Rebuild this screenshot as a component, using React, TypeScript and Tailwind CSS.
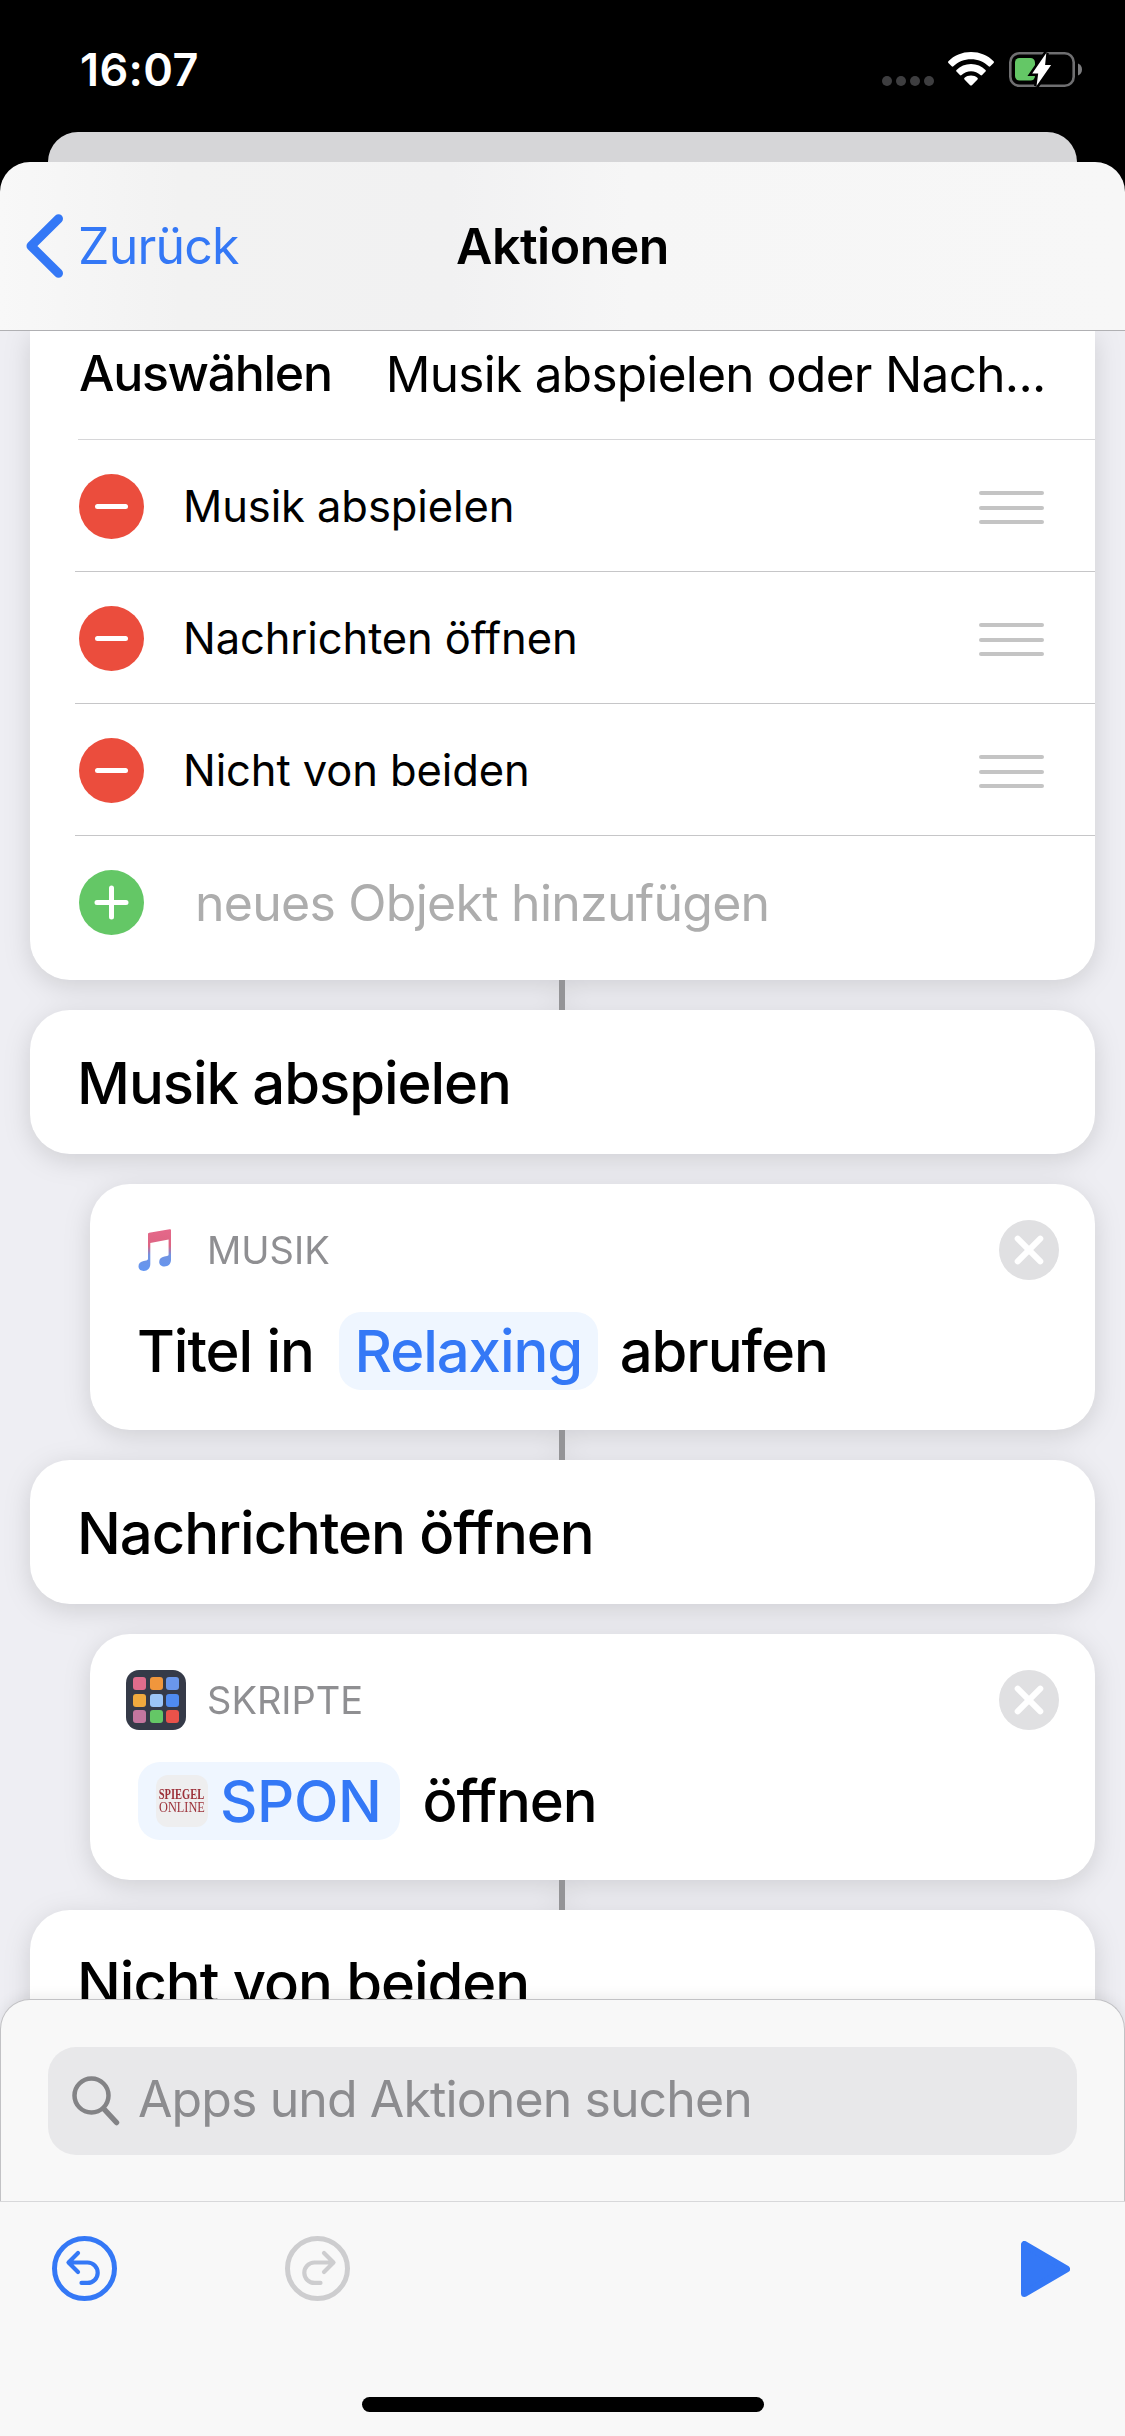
import { ReactNode } from 'react';

const CHOICES = ['Musik abspielen', 'Nachrichten öffnen', 'Nicht von beiden'];

const APP_COLORS = [
  'bg-[#e06c8c]',
  'bg-[#f0963c]',
  'bg-[#6a97ec]',
  'bg-[#f0aa3e]',
  'bg-[#9cc5f6]',
  'bg-[#4f8bf0]',
  'bg-[#c4769f]',
  'bg-[#64c766]',
  'bg-[#e9524a]',
];

function StatusBar() {
  return (
    <div className="flex h-[132px] shrink-0 items-start justify-between pl-[80px] pr-[43px] pt-[52px] text-white">
      <span className="text-[45px] font-semibold leading-[35px] tracking-[0.4px]">16:07</span>
      <div className="flex h-[34px] items-start">
        <div className="mt-[24px] flex gap-[4px]">
          {[0, 1, 2, 3].map((dot) => (
            <span key={dot} className="size-[10px] rounded-full bg-[#3e3e40]" />
          ))}
        </div>
        <svg className="ml-[14px]" width="46" height="34" viewBox="0 0 46 34" fill="#fff">
          <path d="M23 0C32 0 40 3.4 45.6 9.2c.5.5.5 1.2 0 1.7l-3.3 3.4c-.5.5-1.2.5-1.7 0C36 9.8 29.8 7.3 23 7.3S10 9.8 5.4 14.3c-.5.5-1.2.5-1.7 0L.4 10.9c-.5-.5-.5-1.2 0-1.7C6 3.4 14 0 23 0z" />
          <path d="M23 12c5.7 0 10.8 2.2 14.5 5.9.5.5.5 1.2 0 1.7l-3.4 3.4c-.5.5-1.2.5-1.7 0-2.5-2.3-5.8-3.7-9.400-3.700s-6.900 1.400-9.400 3.700c-.5.5-1.200.5-1.700 0l-3.400-3.400c-.5-.5-.5-1.200 0-1.700C12.200 14.200 17.300 12 23 12z" />
          <path d="M23 23.500c2.500 0 4.700.9 6.400 2.300.6.5.6 1.200.1 1.700l-5.600 5.700c-.5.500-1.300.500-1.800 0l-5.600-5.700c-.5-.5-.5-1.200.1-1.700 1.700-1.400 3.900-2.300 6.400-2.300z" />
        </svg>
        <svg className="ml-[15px]" width="73" height="35" viewBox="0 0 73 35" fill="none">
          <rect x="1.300" y="1.300" width="63.400" height="32.400" rx="9" stroke="#6f6f71" strokeWidth="2.600" />
          <path d="M69 11.500c2.600 1 4 3.300 4 6s-1.400 5-4 6z" fill="#7c7c7e" />
          <rect x="6" y="6" width="20" height="22.500" rx="4.500" fill="#64c766" />
          <path
            d="M37.300 1 23.200 21.500h6L27.500 34l14.600-21h-6z"
            fill="#fff"
            stroke="#000"
            strokeWidth="5"
            paintOrder="stroke"
          />
        </svg>
      </div>
    </div>
  );
}

function NavBar() {
  return (
    <div className="relative flex h-[169px] shrink-0 items-center justify-center rounded-t-[30px] border-b border-[#b0b0b3] bg-[linear-gradient(90deg,#f8f8f8_0%,#f2f2f2_16%,#f1f1f2_40%,#f6f6f6_56%,#f7f7f7_100%)]">
      <button className="absolute left-[26px] flex items-center text-[#3478f6]">
        <svg width="37" height="64" viewBox="0 0 37 64" fill="none">
          <path d="M32.500 4.700 5 32l27.500 27.300" stroke="#3478f6" strokeWidth="9" strokeLinecap="round" strokeLinejoin="round" />
        </svg>
        <span className="ml-[15px] text-[50px] leading-[64px] tracking-[-0.8px]">Zurück</span>
      </button>
      <h1 className="text-[50px] font-semibold leading-[64px] tracking-[-0.5px]">Aktionen</h1>
    </div>
  );
}

function DragHandle() {
  return (
    <span className="mt-[2px] flex w-[65px] flex-col gap-[10.5px]">
      <span className="h-[4px] rounded-full bg-[#c4c4c4]" />
      <span className="h-[4px] rounded-full bg-[#c4c4c4]" />
      <span className="h-[4px] rounded-full bg-[#c4c4c4]" />
    </span>
  );
}

function RoundIcon({ plus }: { plus?: boolean }) {
  return (
    <svg width="65" height="65" viewBox="0 0 65 65" className="shrink-0">
      <circle cx="32.500" cy="32.500" r="32.500" fill={plus ? '#64c766' : '#eb4d3d'} />
      <path
        d={plus ? 'M18 32.500h29M32.500 18v29' : 'M18.500 32.500h28'}
        stroke="#fff"
        strokeWidth="5"
        strokeLinecap="round"
      />
    </svg>
  );
}

function ChoiceCard() {
  return (
    <div className="rounded-b-[40px] bg-white">
      <div className="flex h-[108px] items-center pb-6 pl-[49px]">
        <span className="text-[50px] font-medium leading-[60px] tracking-[-1.3px]">Auswählen</span>
        <span className="ml-[54px] mt-[2px] whitespace-nowrap text-[49.5px] leading-[60px] tracking-[-0.7px]">
          Musik abspielen oder Nach...
        </span>
      </div>
      {CHOICES.map((choice, i) => (
        <div key={choice} className={i === 0 ? 'pl-[48px]' : 'pl-[45px]'}>
          <div
            className={`flex h-[132px] items-center border-t pr-[51px] pt-[2px] ${
              i === 0 ? 'border-[#d6d6d8] pl-[1px]' : 'border-[#c6c6c8] pl-[4px]'
            }`}
          >
            <RoundIcon />
            <span className="-mt-[2px] ml-[39px] flex-1 text-[43.5px] leading-[60px] tracking-[-0.1px]">{choice}</span>
            <DragHandle />
          </div>
        </div>
      ))}
      <div className="pl-[45px]">
        <div className="flex h-[145px] items-center border-t border-[#c6c6c8] pb-[11px] pl-[4px]">
          <RoundIcon plus />
          <span className="ml-[51px] text-[50px] leading-[60px] tracking-[-0.75px] text-[#adadad]">
            neues Objekt hinzufügen
          </span>
        </div>
      </div>
    </div>
  );
}

function CaseCard({ title }: { title: string }) {
  return (
    <div className="flex h-[144px] items-center rounded-[40px] bg-white pl-[47px] pt-[2px] text-[58px] font-medium leading-[80px] tracking-[-1.05px]">
      {title}
    </div>
  );
}

function ActionCard({ icon, label, children }: { icon: ReactNode; label: string; children: ReactNode }) {
  return (
    <div className="ml-[60px] h-[246px] rounded-[40px] bg-white pl-[36px] pr-[36px] pt-[36px]">
      <div className="flex h-[60px] items-center">
        <span className="flex size-[60px] items-center justify-center">{icon}</span>
        <span className="ml-[21px] flex-1 text-[38px] leading-[50px] text-[#8f8f92]">{label}</span>
        <svg width="60" height="60" viewBox="0 0 60 60">
          <circle cx="30" cy="30" r="30" fill="#e0e0e2" />
          <path d="m18.700 18.700 22.600 22.600m0-22.600L18.700 41.300" stroke="#fff" strokeWidth="6" strokeLinecap="round" />
        </svg>
      </div>
      <div className="mt-[32px] flex h-[78px] items-center pl-[12px] text-[58px] font-medium leading-[78px] tracking-[-1.05px]">
        {children}
      </div>
    </div>
  );
}

function MusicIcon() {
  return (
    <svg width="34" height="42" viewBox="0 0 34 42" className="-ml-[3px]">
      <defs>
        <linearGradient id="note" x1="0" y1="0" x2="0" y2="1">
          <stop offset="0" stopColor="#e5688a" />
          <stop offset="0.400" stopColor="#dd6482" />
          <stop offset="0.620" stopColor="#7193e2" />
          <stop offset="1" stopColor="#6396f2" />
        </linearGradient>
      </defs>
      <path
        d="M10 5.200c0-.8.400-1.200 1.200-1.400L31.600.200c.8-.1 1.400.200 1.400 1.100v29.500c0 4.200-2.800 6.700-6.500 6.700-3.200 0-5.300-1.900-5.300-4.600 0-2.900 2-4.600 5.200-5.300l2.600-.5c1.200-.3 1.600-.7 1.600-1.800V10.500L12.300 14v21c0 4.200-2.700 6.900-6.500 6.900-3.100 0-5.300-1.900-5.300-4.700 0-2.900 2-4.600 5.200-5.200l2.500-.6c1.300-.3 1.800-.8 1.800-2z"
        fill="url(#note)"
      />
    </svg>
  );
}

function ScriptIcon() {
  return (
    <div className="grid size-[60px] grid-cols-3 content-center justify-center gap-[3.5px] rounded-[13px] bg-[#353a48] px-[7px]">
      {APP_COLORS.map((color) => (
        <span key={color} className={`h-[13px] rounded-[3px] ${color}`} />
      ))}
    </div>
  );
}

function SpiegelIcon() {
  return (
    <span className="flex size-[52px] flex-col items-center justify-center rounded-[12px] bg-[#eeeeef] font-['Liberation_Serif',serif] text-[15px] leading-[13px] tracking-normal text-[#9c3039]">
      <span className="scale-x-[0.7] font-bold">SPIEGEL</span>
      <span className="scale-x-[0.82] font-normal">ONLINE</span>
    </span>
  );
}

function Connector() {
  return <div className="ml-[529px] h-[30px] w-[6px] bg-[#949497]" />;
}

function CurvedArrow({ flip, color }: { flip?: boolean; color: string }) {
  return (
    <svg width="65" height="65" viewBox="0 0 65 65" fill="none" stroke={color} className={flip ? '-scale-x-100' : ''}>
      <circle cx="32.500" cy="32.500" r="30" strokeWidth="5" />
      <path
        d="M26 17 16.500 26.500 26 36M17 26.500h18.500a10.200 10.200 0 0 1 0 20.400H29.500"
        strokeWidth="4.200"
        strokeLinecap="round"
        strokeLinejoin="round"
      />
    </svg>
  );
}

function BottomPanel() {
  return (
    <div className="relative -mt-[30px] shrink-0">
      <div className="h-[202px] rounded-t-[30px] border border-b-0 border-[#c2c2c5] bg-[#f8f8f8] px-[47px] pt-[47px] shadow-[0_-2px_14px_rgba(0,0,0,0.08)]">
        <div className="flex h-[108px] items-center rounded-[28px] bg-[#e8e8ea] pl-[24px]">
          <svg width="48" height="50" viewBox="0 0 48 50" fill="none" stroke="#838386" strokeLinecap="round">
            <circle cx="19.500" cy="19.500" r="17" strokeWidth="4.500" />
            <path d="m32 33 12.500 13.500" strokeWidth="5.500" />
          </svg>
          <span className="ml-[18px] pb-[4px] text-[50px] leading-[60px] tracking-[-0.9px] text-[#8c8c8f]">
            Apps und Aktionen suchen
          </span>
        </div>
      </div>
      <div className="relative flex h-[235px] flex-col justify-between border-t border-[#d8d8da] bg-[#f8f8f8] pb-[24px] pt-[34px]">
        <div className="flex items-center pl-[52px] pr-[55px]">
          <CurvedArrow color="#3478f6" />
          <span className="ml-[168px] flex-1">
            <CurvedArrow flip color="#cdcdcf" />
          </span>
          <svg width="49" height="56" viewBox="0 0 49 56">
            <path d="M3.500 3.500v49l42-24.500z" fill="#3478f6" stroke="#3478f6" strokeWidth="7" strokeLinejoin="round" />
          </svg>
        </div>
        <div className="mx-auto h-[15px] w-[402px] rounded-full bg-black" />
      </div>
    </div>
  );
}

export default function App() {
  return (
    <div className="flex h-[2436px] w-[1125px] flex-col overflow-hidden bg-black font-['Inter',sans-serif] text-black">
      <StatusBar />
      <div className="mx-[48px] h-[60px] shrink-0 rounded-t-[30px] bg-[#d6d6d8]" />
      <div className="-mt-[30px] flex min-h-0 flex-1 flex-col">
        <NavBar />
        <div className="min-h-0 flex-1 overflow-hidden bg-[#eeeef3] px-[30px]">
          <div className="drop-shadow-[0_6px_13px_rgba(0,0,0,0.13)]">
            <ChoiceCard />
            <Connector />
            <CaseCard title="Musik abspielen" />
            <div className="h-[30px]" />
            <ActionCard icon={<MusicIcon />} label="MUSIK">
              <span className="-ml-[1px]">Titel in</span>
              <span className="ml-[25px] rounded-[22px] bg-[#eff6ff] px-[15.5px] text-[#3478f6]">Relaxing</span>
              <span className="ml-[22px]">abrufen</span>
            </ActionCard>
            <Connector />
            <CaseCard title="Nachrichten öffnen" />
            <div className="h-[30px]" />
            <ActionCard icon={<ScriptIcon />} label="SKRIPTE">
              <span className="flex items-center rounded-[22px] bg-[#eff6ff] pl-[18px] pr-[19px] text-[#3478f6]">
                <SpiegelIcon />
                <span className="ml-[12px] tracking-[-0.4px]">SPON</span>
              </span>
              <span className="ml-[22px]">öffnen</span>
            </ActionCard>
            <Connector />
            <CaseCard title="Nicht von beiden" />
          </div>
        </div>
        <BottomPanel />
      </div>
    </div>
  );
}
